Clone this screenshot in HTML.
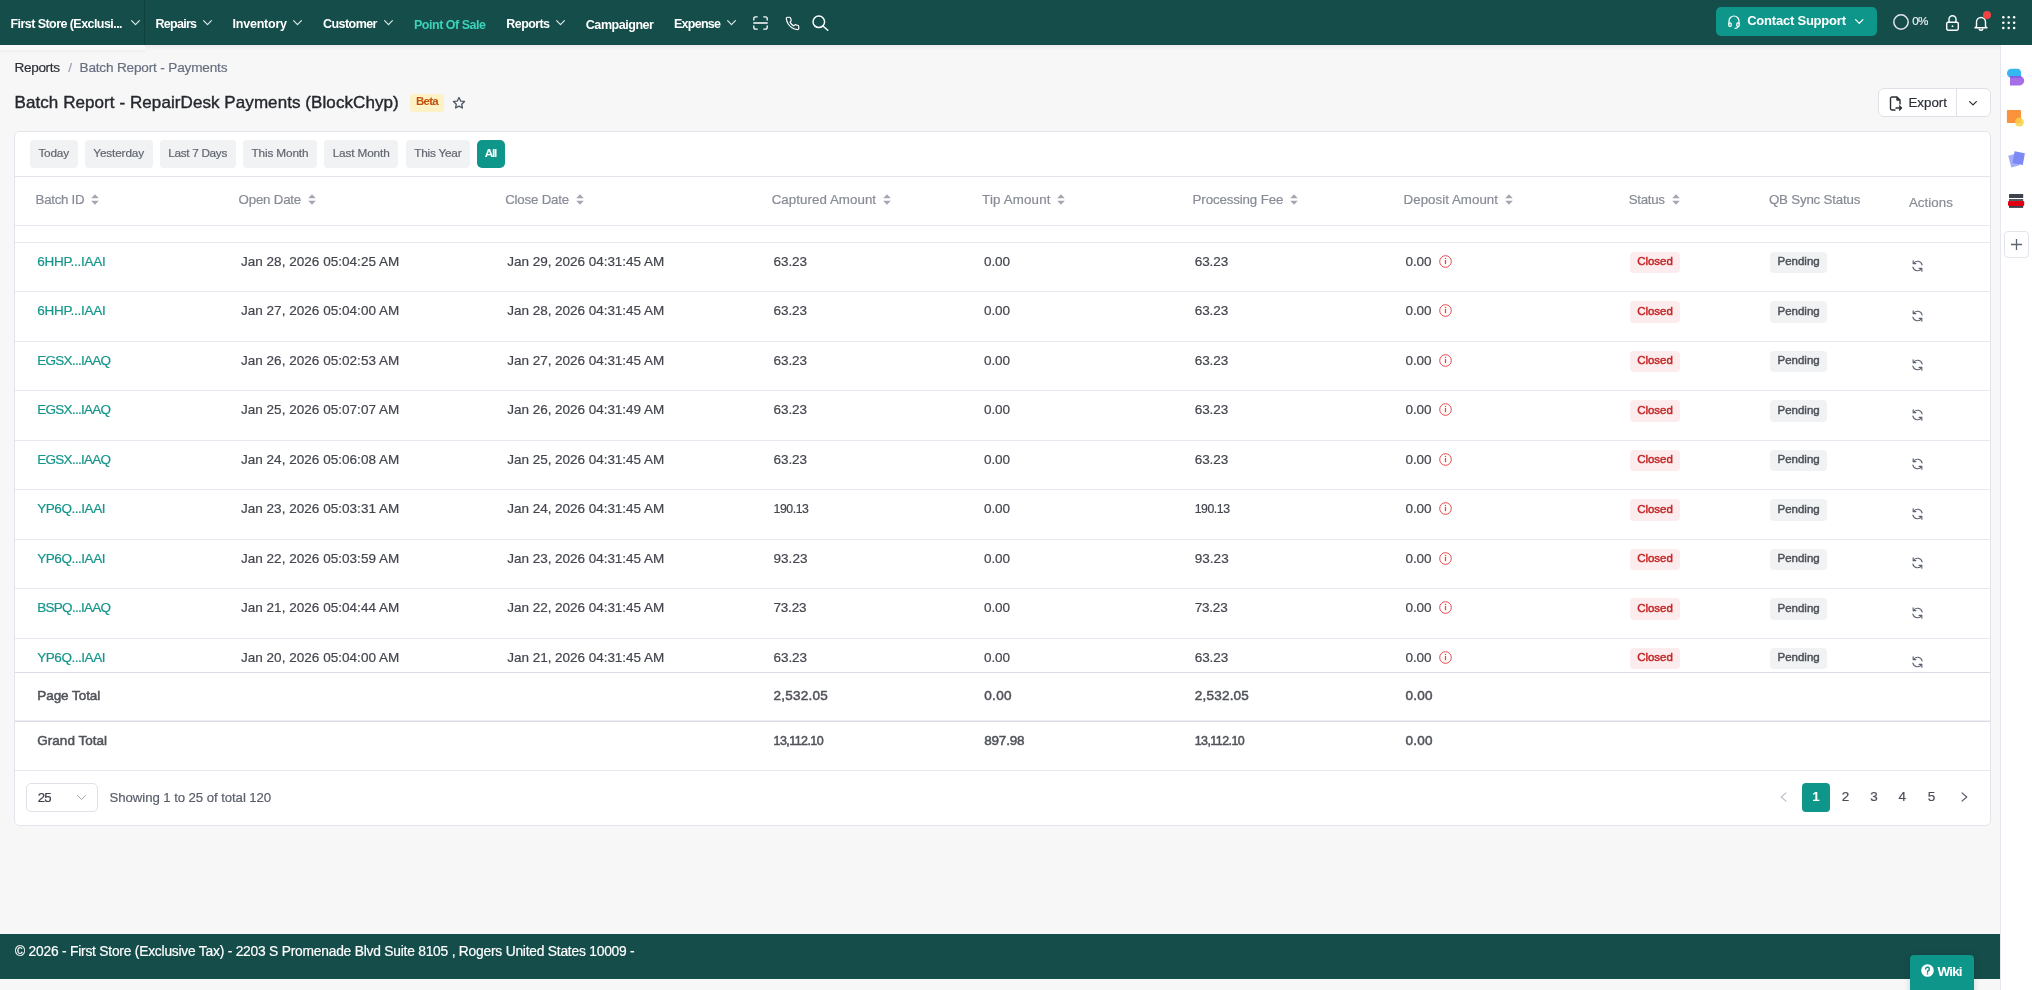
<!DOCTYPE html>
<html><head><meta charset="utf-8"><title>Batch Report - Payments</title>
<style>
html,body{margin:0;padding:0;width:2032px;height:990px;overflow:hidden;background:#f7f7f7}
body{position:relative;font-family:"Liberation Sans", sans-serif}
.t{position:absolute;white-space:nowrap}
.b{position:absolute}
svg.b{overflow:visible}
</style></head><body>
<div id="root" style="position:absolute;left:0;top:0;width:2032px;height:990px;will-change:transform"><div class="b" style="left:0px;top:0px;width:2032px;height:45px;background:#154d4b"></div><div class="b" style="left:145px;top:45px;width:1887px;height:5px;background:linear-gradient(rgba(0,0,0,0.045),rgba(0,0,0,0))"></div><div class="b" style="left:0px;top:45px;width:145px;height:5px;background:#f9f9f9"></div><div class="b" style="left:0px;top:50px;width:145px;height:4px;background:linear-gradient(rgba(0,0,0,0.035),rgba(0,0,0,0))"></div><div class="t" style="left:10.5px;top:18.02px;font-size:12.5px;line-height:12.5px;color:#fff;font-weight:700;letter-spacing:-0.56px;">First Store (Exclusi...</div><svg class="b" style="left:131px;top:20px" width="9" height="5.3" viewBox="0 0 9 5.3"><path d="M0.6 0.6 L4.5 4.7 L8.4 0.6" fill="none" stroke="#dfe6e6" stroke-width="1.2" stroke-linecap="round" stroke-linejoin="round"/></svg><div class="b" style="left:144px;top:0px;width:1px;height:45px;background:#10403e"></div><div class="t" style="left:155.5px;top:18.02px;font-size:12.5px;line-height:12.5px;color:#fff;font-weight:700;letter-spacing:-0.729px;">Repairs</div><svg class="b" style="left:203px;top:20px" width="9" height="5.3" viewBox="0 0 9 5.3"><path d="M0.6 0.6 L4.5 4.7 L8.4 0.6" fill="none" stroke="#dfe6e6" stroke-width="1.2" stroke-linecap="round" stroke-linejoin="round"/></svg><div class="t" style="left:232.5px;top:18.02px;font-size:12.5px;line-height:12.5px;color:#fff;font-weight:700;letter-spacing:-0.219px;">Inventory</div><svg class="b" style="left:293px;top:20px" width="9" height="5.3" viewBox="0 0 9 5.3"><path d="M0.6 0.6 L4.5 4.7 L8.4 0.6" fill="none" stroke="#dfe6e6" stroke-width="1.2" stroke-linecap="round" stroke-linejoin="round"/></svg><div class="t" style="left:323.0px;top:18.02px;font-size:12.5px;line-height:12.5px;color:#fff;font-weight:700;letter-spacing:-0.554px;">Customer</div><svg class="b" style="left:384px;top:20px" width="9" height="5.3" viewBox="0 0 9 5.3"><path d="M0.6 0.6 L4.5 4.7 L8.4 0.6" fill="none" stroke="#dfe6e6" stroke-width="1.2" stroke-linecap="round" stroke-linejoin="round"/></svg><div class="t" style="left:414.0px;top:19.02px;font-size:12.5px;line-height:12.5px;color:#3bd3ba;font-weight:700;letter-spacing:-0.484px;">Point Of Sale</div><div class="t" style="left:506.3px;top:18.02px;font-size:12.5px;line-height:12.5px;color:#fff;font-weight:700;letter-spacing:-0.575px;">Reports</div><svg class="b" style="left:556px;top:20px" width="9" height="5.3" viewBox="0 0 9 5.3"><path d="M0.6 0.6 L4.5 4.7 L8.4 0.6" fill="none" stroke="#dfe6e6" stroke-width="1.2" stroke-linecap="round" stroke-linejoin="round"/></svg><div class="t" style="left:585.8px;top:19.02px;font-size:12.5px;line-height:12.5px;color:#fff;font-weight:700;letter-spacing:-0.45px;">Campaigner</div><div class="t" style="left:674.0px;top:18.02px;font-size:12.5px;line-height:12.5px;color:#fff;font-weight:700;letter-spacing:-0.74px;">Expense</div><svg class="b" style="left:727px;top:20px" width="9" height="5.3" viewBox="0 0 9 5.3"><path d="M0.6 0.6 L4.5 4.7 L8.4 0.6" fill="none" stroke="#dfe6e6" stroke-width="1.2" stroke-linecap="round" stroke-linejoin="round"/></svg><svg class="b" style="left:753px;top:16px" width="15" height="14" viewBox="0 0 15 14" fill="none" stroke="#fff" stroke-width="1.3" stroke-linecap="round"><path d="M0.8 4V2.6A1.8 1.8 0 0 1 2.6 0.8H4.2M10.8 0.8h1.6a1.8 1.8 0 0 1 1.8 1.8V4M14.2 10v1.4a1.8 1.8 0 0 1-1.8 1.8h-1.6M4.2 13.2H2.6a1.8 1.8 0 0 1-1.8-1.8V10M0.8 7h13.4"/></svg><svg class="b" style="left:785px;top:16px" width="15" height="15" viewBox="0 0 24 24" fill="none" stroke="#fff" stroke-width="1.9" stroke-linecap="round" stroke-linejoin="round"><path d="M22 16.9v3a2 2 0 0 1-2.2 2 19.8 19.8 0 0 1-8.6-3.1 19.5 19.5 0 0 1-6-6A19.8 19.8 0 0 1 2.1 4.2 2 2 0 0 1 4.1 2h3a2 2 0 0 1 2 1.7c.1 1 .4 1.9.7 2.8a2 2 0 0 1-.5 2.1L8 9.8a16 16 0 0 0 6 6l1.3-1.3a2 2 0 0 1 2.1-.4c.9.3 1.8.6 2.8.7a2 2 0 0 1 1.7 2z"/></svg><svg class="b" style="left:812px;top:15px" width="17" height="16" viewBox="0 0 17 16" fill="none" stroke="#fff" stroke-width="1.5" stroke-linecap="round"><circle cx="6.8" cy="6.8" r="5.8"/><path d="M11.2 11.2 L15.8 15.3"/></svg><div class="b" style="left:1716px;top:7px;width:161px;height:29px;background:#0f968a;border-radius:5px"></div><svg class="b" style="left:1728px;top:15px" width="12" height="14" viewBox="0 0 12 14" fill="none" stroke="#fff" stroke-width="1.2" stroke-linecap="round"><path d="M1 9V6a5 5 0 0 1 10 0v3"/><rect x="0.8" y="7.8" width="2.4" height="3.6" rx="1"/><rect x="8.8" y="7.8" width="2.4" height="3.6" rx="1"/><path d="M10 11.5c0 1-1 1.8-3 1.8"/></svg><div class="t" style="left:1747.2px;top:14.00px;font-size:13px;line-height:13px;color:#fff;font-weight:700;letter-spacing:-0.218px;">Contact Support</div><svg class="b" style="left:1855px;top:19px" width="8.5" height="5" viewBox="0 0 8.5 5"><path d="M0.6 0.6 L4.25 4.4 L7.9 0.6" fill="none" stroke="#fff" stroke-width="1.2" stroke-linecap="round" stroke-linejoin="round"/></svg><svg class="b" style="left:1893px;top:14px" width="16" height="16" viewBox="0 0 16 16"><circle cx="8" cy="8" r="7.2" fill="none" stroke="#e4e4ee" stroke-width="1.5"/></svg><div class="t" style="left:1912.3px;top:15.10px;font-size:11.7px;line-height:11.7px;color:#ececf2;font-weight:400;letter-spacing:-0.706px;-webkit-text-stroke:0.2px #ececf2;">0%</div><svg class="b" style="left:1946px;top:15px" width="13" height="16" viewBox="0 0 13 16" fill="none" stroke="#fff" stroke-width="1.4"><rect x="0.7" y="7.2" width="11.6" height="8" rx="1.6"/><path d="M3 7.2V4.3a3.5 3.5 0 0 1 7 0v2.9"/><circle cx="6.5" cy="11.2" r="0.9" fill="#fff" stroke="none"/></svg><svg class="b" style="left:1974px;top:15px" width="14" height="16" viewBox="0 0 14 16" fill="none" stroke="#fff" stroke-width="1.4" stroke-linejoin="round"><path d="M2.5 11.5V7a4.5 4.5 0 0 1 9 0v4.5l1.5 1.2H1z"/><path d="M5.2 13.5a1.8 1.8 0 0 0 3.6 0"/></svg><div class="b" style="left:1983px;top:11px;width:8px;height:8px;background:#ef4444;border-radius:50%"></div><svg class="b" style="left:2002px;top:16px" width="14" height="14" viewBox="0 0 14 14"><circle cx="1.3" cy="1.3" r="1.25" fill="#fff"/><circle cx="6.7" cy="1.3" r="1.25" fill="#fff"/><circle cx="12.100000000000001" cy="1.3" r="1.25" fill="#fff"/><circle cx="1.3" cy="6.7" r="1.25" fill="#fff"/><circle cx="6.7" cy="6.7" r="1.25" fill="#fff"/><circle cx="12.100000000000001" cy="6.7" r="1.25" fill="#fff"/><circle cx="1.3" cy="12.100000000000001" r="1.25" fill="#fff"/><circle cx="6.7" cy="12.100000000000001" r="1.25" fill="#fff"/><circle cx="12.100000000000001" cy="12.100000000000001" r="1.25" fill="#fff"/></svg><div class="b" style="left:2000px;top:45px;width:32px;height:945px;background:#fff;border-left:1px solid #e6e7ee;box-sizing:border-box"></div><svg class="b" style="left:2006px;top:68px" width="19" height="18" viewBox="0 0 19 18"><path d="M5.4 0.8H11a4 4 0 0 1 4 4V9.7H5.4a4.45 4.45 0 0 1 0-8.9z" fill="#35b8f2"/><path d="M4 8.1H13.5a4.7 4.7 0 0 1 0 9.4H4z" fill="#a66ee6"/><path d="M4 8.1H15V9.7H4z" fill="#7c5ce0"/></svg><svg class="b" style="left:2006px;top:109px" width="19" height="19" viewBox="0 0 19 19"><rect x="0.9" y="1" width="14.1" height="13" rx="0.8" fill="#fb923c"/><circle cx="13.4" cy="13.1" r="4.5" fill="#f7d04a" opacity="0.85"/></svg><svg class="b" style="left:2007px;top:150px" width="19" height="19" viewBox="0 0 19 19"><path d="M1.2 5.8 L9.5 3.5 L12.6 15.3 L4.3 17.6z" fill="#a3acfb" /><path d="M7.6 1.2 L17.9 3.2 L15.8 14.9 L5.5 12.9z" fill="#7d8af5"/></svg><svg class="b" style="left:2008px;top:194px" width="17" height="14" viewBox="0 0 17 14"><rect x="1" y="0" width="14.2" height="4" rx="0.6" fill="#3d424d"/><rect x="1" y="5" width="14.2" height="2" fill="#555b66"/><rect x="1" y="11.5" width="14.2" height="2.4" fill="#3d424d"/><rect x="0" y="7" width="16.2" height="5" rx="1.2" fill="#e0000f"/></svg><div class="b" style="left:2004px;top:231px;width:25px;height:27px;background:#fff;border:1px solid #e3e5ec;border-radius:4px;box-sizing:border-box"></div><svg class="b" style="left:2010px;top:238px" width="13" height="13" viewBox="0 0 13 13" stroke="#5b6270" stroke-width="1.3"><path d="M6.5 1v11M1 6.5h11"/></svg><div class="t" style="left:14.5px;top:61.09px;font-size:13.6px;line-height:13.6px;color:#2b2f36;font-weight:400;letter-spacing:-0.35px;-webkit-text-stroke:0.2px #2b2f36;">Reports</div><div class="t" style="left:68.2px;top:61.09px;font-size:13.6px;line-height:13.6px;color:#9aa0ad;font-weight:400;letter-spacing:0px;-webkit-text-stroke:0.2px #9aa0ad;">/</div><div class="t" style="left:79.5px;top:61.09px;font-size:13.6px;line-height:13.6px;color:#687080;font-weight:400;letter-spacing:-0.178px;-webkit-text-stroke:0.2px #687080;">Batch Report - Payments</div><div class="t" style="left:14.5px;top:93.61px;font-size:17px;line-height:17px;color:#25282e;font-weight:400;letter-spacing:0.077px;-webkit-text-stroke:0.4px #25282e;">Batch Report - RepairDesk Payments (BlockChyp)</div><div class="b" style="left:410px;top:94px;width:34px;height:18px;background:#fdf2c6;border-radius:4px"></div><div class="t" style="left:416.0px;top:95.87px;font-size:11.5px;line-height:11.5px;color:#c2510c;font-weight:700;letter-spacing:-0.737px;">Beta</div><svg class="b" style="left:452px;top:96px" width="14" height="14" viewBox="0 0 24 24" fill="none" stroke="#4b5260" stroke-width="2.2" stroke-linejoin="round"><path d="M12 2.5l2.9 6.1 6.6.8-4.9 4.6 1.3 6.6L12 17.3l-5.9 3.3 1.3-6.6-4.9-4.6 6.6-.8z"/></svg><div class="b" style="left:1878px;top:88px;width:113px;height:29px;background:#fff;border:1px solid #dfe1e8;border-radius:6px;box-sizing:border-box"></div><div class="b" style="left:1956px;top:89px;width:1px;height:27px;background:#dfe1e8"></div><svg class="b" style="left:1889px;top:96px" width="14" height="15" viewBox="0 0 14 15" fill="none" stroke="#2b2f36" stroke-width="1.4" stroke-linejoin="round" stroke-linecap="round"><path d="M8 1H3a1.5 1.5 0 0 0-1.5 1.5v10A1.5 1.5 0 0 0 3 14h3M8 1l3 3v4M8 1v3h3M7 12h5.5M10.5 10l2 2-2 2"/></svg><div class="t" style="left:1908.4px;top:95.74px;font-size:13.3px;line-height:13.3px;color:#2b2f36;font-weight:400;letter-spacing:0.033px;-webkit-text-stroke:0.2px #2b2f36;">Export</div><svg class="b" style="left:1969px;top:101px" width="8" height="4.5" viewBox="0 0 8 4.5"><path d="M0.65 0.65 L4.0 3.85 L7.35 0.65" fill="none" stroke="#2b2f36" stroke-width="1.3" stroke-linecap="round" stroke-linejoin="round"/></svg><div class="b" style="left:14px;top:131px;width:1977px;height:695px;background:#fff;border:1px solid #e3e5ec;border-radius:5px;box-sizing:border-box"></div><div class="b" style="left:30px;top:140px;width:48px;height:28px;background:#f1f2f4;border-radius:4px"></div><div class="t" style="left:38.4px;top:147.61px;font-size:11.8px;line-height:11.8px;color:#62666f;font-weight:400;letter-spacing:-0.202px;-webkit-text-stroke:0.2px #62666f;">Today</div><div class="b" style="left:85px;top:140px;width:68px;height:28px;background:#f1f2f4;border-radius:4px"></div><div class="t" style="left:93.3px;top:147.61px;font-size:11.8px;line-height:11.8px;color:#62666f;font-weight:400;letter-spacing:-0.155px;-webkit-text-stroke:0.2px #62666f;">Yesterday</div><div class="b" style="left:160px;top:140px;width:76px;height:28px;background:#f1f2f4;border-radius:4px"></div><div class="t" style="left:168.3px;top:147.61px;font-size:11.8px;line-height:11.8px;color:#62666f;font-weight:400;letter-spacing:-0.33px;-webkit-text-stroke:0.2px #62666f;">Last 7 Days</div><div class="b" style="left:243px;top:140px;width:74px;height:28px;background:#f1f2f4;border-radius:4px"></div><div class="t" style="left:251.5px;top:147.61px;font-size:11.8px;line-height:11.8px;color:#62666f;font-weight:400;letter-spacing:-0.15px;-webkit-text-stroke:0.2px #62666f;">This Month</div><div class="b" style="left:324px;top:140px;width:74px;height:28px;background:#f1f2f4;border-radius:4px"></div><div class="t" style="left:332.7px;top:147.61px;font-size:11.8px;line-height:11.8px;color:#62666f;font-weight:400;letter-spacing:-0.15px;-webkit-text-stroke:0.2px #62666f;">Last Month</div><div class="b" style="left:406px;top:140px;width:64px;height:28px;background:#f1f2f4;border-radius:4px"></div><div class="t" style="left:414.2px;top:147.61px;font-size:11.8px;line-height:11.8px;color:#62666f;font-weight:400;letter-spacing:-0.226px;-webkit-text-stroke:0.2px #62666f;">This Year</div><div class="b" style="left:477px;top:140px;width:28px;height:28px;background:#0f968a;border-radius:5px"></div><div class="t" style="left:484.8px;top:147.61px;font-size:11.8px;line-height:11.8px;color:#fff;font-weight:700;letter-spacing:-1.352px;">All</div><div class="b" style="left:15px;top:176px;width:1975px;height:1px;background:#e3e5ec"></div><div class="t" style="left:35.6px;top:192.74px;font-size:13.3px;line-height:13.3px;color:#878b96;font-weight:400;letter-spacing:-0.287px;-webkit-text-stroke:0.2px #878b96;">Batch ID</div><svg class="b" style="left:91px;top:194px" width="8" height="11" viewBox="0 0 8 11"><path d="M4 0.3 L7.8 4.3 H0.2z M4 10.7 L7.8 6.7 H0.2z" fill="#a3a7b1"/></svg><div class="t" style="left:238.6px;top:192.74px;font-size:13.3px;line-height:13.3px;color:#878b96;font-weight:400;letter-spacing:-0.213px;-webkit-text-stroke:0.2px #878b96;">Open Date</div><svg class="b" style="left:308px;top:194px" width="8" height="11" viewBox="0 0 8 11"><path d="M4 0.3 L7.8 4.3 H0.2z M4 10.7 L7.8 6.7 H0.2z" fill="#a3a7b1"/></svg><div class="t" style="left:505.2px;top:192.74px;font-size:13.3px;line-height:13.3px;color:#878b96;font-weight:400;letter-spacing:-0.196px;-webkit-text-stroke:0.2px #878b96;">Close Date</div><svg class="b" style="left:576px;top:194px" width="8" height="11" viewBox="0 0 8 11"><path d="M4 0.3 L7.8 4.3 H0.2z M4 10.7 L7.8 6.7 H0.2z" fill="#a3a7b1"/></svg><div class="t" style="left:771.7px;top:192.74px;font-size:13.3px;line-height:13.3px;color:#878b96;font-weight:400;letter-spacing:0.061px;-webkit-text-stroke:0.2px #878b96;">Captured Amount</div><svg class="b" style="left:883px;top:194px" width="8" height="11" viewBox="0 0 8 11"><path d="M4 0.3 L7.8 4.3 H0.2z M4 10.7 L7.8 6.7 H0.2z" fill="#a3a7b1"/></svg><div class="t" style="left:982.1px;top:192.74px;font-size:13.3px;line-height:13.3px;color:#878b96;font-weight:400;letter-spacing:0.17px;-webkit-text-stroke:0.2px #878b96;">Tip Amount</div><svg class="b" style="left:1057px;top:194px" width="8" height="11" viewBox="0 0 8 11"><path d="M4 0.3 L7.8 4.3 H0.2z M4 10.7 L7.8 6.7 H0.2z" fill="#a3a7b1"/></svg><div class="t" style="left:1192.6px;top:192.74px;font-size:13.3px;line-height:13.3px;color:#878b96;font-weight:400;letter-spacing:-0.126px;-webkit-text-stroke:0.2px #878b96;">Processing Fee</div><svg class="b" style="left:1290px;top:194px" width="8" height="11" viewBox="0 0 8 11"><path d="M4 0.3 L7.8 4.3 H0.2z M4 10.7 L7.8 6.7 H0.2z" fill="#a3a7b1"/></svg><div class="t" style="left:1403.6px;top:192.74px;font-size:13.3px;line-height:13.3px;color:#878b96;font-weight:400;letter-spacing:0.039px;-webkit-text-stroke:0.2px #878b96;">Deposit Amount</div><svg class="b" style="left:1505px;top:194px" width="8" height="11" viewBox="0 0 8 11"><path d="M4 0.3 L7.8 4.3 H0.2z M4 10.7 L7.8 6.7 H0.2z" fill="#a3a7b1"/></svg><div class="t" style="left:1628.7px;top:192.74px;font-size:13.3px;line-height:13.3px;color:#878b96;font-weight:400;letter-spacing:-0.281px;-webkit-text-stroke:0.2px #878b96;">Status</div><svg class="b" style="left:1672px;top:194px" width="8" height="11" viewBox="0 0 8 11"><path d="M4 0.3 L7.8 4.3 H0.2z M4 10.7 L7.8 6.7 H0.2z" fill="#a3a7b1"/></svg><div class="t" style="left:1768.9px;top:192.74px;font-size:13.3px;line-height:13.3px;color:#878b96;font-weight:400;letter-spacing:-0.184px;-webkit-text-stroke:0.2px #878b96;">QB Sync Status</div><div class="t" style="left:1908.9px;top:195.74px;font-size:13.3px;line-height:13.3px;color:#878b96;font-weight:400;letter-spacing:0.079px;-webkit-text-stroke:0.2px #878b96;">Actions</div><div class="b" style="left:15px;top:225px;width:1975px;height:1px;background:#e8e9f0"></div><div class="b" style="left:15px;top:242px;width:1975px;height:1px;background:#e8e9f0"></div><div class="b" style="left:15px;top:243px;width:1975px;height:429px;overflow:hidden"><div class="t" style="left:22.3px;top:11.87px;font-size:13.5px;line-height:13.5px;color:#15968b;font-weight:400;letter-spacing:-0.261px;-webkit-text-stroke:0.2px #15968b;">6HHP...IAAI</div><div class="t" style="left:225.9px;top:11.87px;font-size:13.5px;line-height:13.5px;color:#43464e;font-weight:400;letter-spacing:0.034px;-webkit-text-stroke:0.2px #43464e;">Jan 28, 2026 05:04:25 AM</div><div class="t" style="left:492.3px;top:11.87px;font-size:13.5px;line-height:13.5px;color:#43464e;font-weight:400;letter-spacing:-0.031px;-webkit-text-stroke:0.2px #43464e;">Jan 29, 2026 04:31:45 AM</div><div class="t" style="left:758.5px;top:11.87px;font-size:13.5px;line-height:13.5px;color:#43464e;font-weight:400;letter-spacing:-0.054px;-webkit-text-stroke:0.2px #43464e;">63.23</div><div class="t" style="left:969.0px;top:11.87px;font-size:13.5px;line-height:13.5px;color:#43464e;font-weight:400;letter-spacing:-0.086px;-webkit-text-stroke:0.2px #43464e;">0.00</div><div class="t" style="left:1179.7px;top:11.87px;font-size:13.5px;line-height:13.5px;color:#43464e;font-weight:400;letter-spacing:-0.054px;-webkit-text-stroke:0.2px #43464e;">63.23</div><div class="t" style="left:1390.5px;top:11.87px;font-size:13.5px;line-height:13.5px;color:#43464e;font-weight:400;letter-spacing:-0.086px;-webkit-text-stroke:0.2px #43464e;">0.00</div><svg class="b" style="left:1424px;top:12.30px" width="13" height="13" viewBox="0 0 13 13"><circle cx="6.5" cy="6.5" r="5.8" fill="none" stroke="#e5484d" stroke-width="1"/><path d="M6.5 5v4.2" stroke="#e5484d" stroke-width="1.3"/><circle cx="6.5" cy="3.5" r="0.75" fill="#e5484d"/></svg><div class="b" style="left:1615px;top:9.30px;width:50px;height:21px;background:#fdeced;border-radius:4px"></div><div class="t" style="left:1622.3px;top:12.97px;font-size:11.5px;line-height:11.5px;color:#c42626;font-weight:400;letter-spacing:-0.064px;-webkit-text-stroke:0.45px #c42626;">Closed</div><div class="b" style="left:1755px;top:9.30px;width:57px;height:21px;background:#f1f2f4;border-radius:4px"></div><div class="t" style="left:1762.5px;top:12.97px;font-size:11.5px;line-height:11.5px;color:#4d5159;font-weight:400;letter-spacing:-0.001px;-webkit-text-stroke:0.45px #4d5159;">Pending</div><svg class="b" style="left:1896px;top:17.30px" width="13" height="12" viewBox="0 0 24 22" fill="none" stroke="#5a6270" stroke-width="2.1" stroke-linecap="round" stroke-linejoin="round"><path d="M20.5 9A8.7 8.7 0 0 0 4.5 6.5M3.5 13a8.7 8.7 0 0 0 16 2.5"/><path d="M4 1.5v5h5M20 20.5v-5h-5"/></svg><div class="b" style="left:0px;top:48px;width:1975px;height:1px;background:#e8e9f0"></div><div class="t" style="left:22.3px;top:60.87px;font-size:13.5px;line-height:13.5px;color:#15968b;font-weight:400;letter-spacing:-0.261px;-webkit-text-stroke:0.2px #15968b;">6HHP...IAAI</div><div class="t" style="left:225.9px;top:60.87px;font-size:13.5px;line-height:13.5px;color:#43464e;font-weight:400;letter-spacing:0.034px;-webkit-text-stroke:0.2px #43464e;">Jan 27, 2026 05:04:00 AM</div><div class="t" style="left:492.3px;top:60.87px;font-size:13.5px;line-height:13.5px;color:#43464e;font-weight:400;letter-spacing:-0.031px;-webkit-text-stroke:0.2px #43464e;">Jan 28, 2026 04:31:45 AM</div><div class="t" style="left:758.5px;top:60.87px;font-size:13.5px;line-height:13.5px;color:#43464e;font-weight:400;letter-spacing:-0.054px;-webkit-text-stroke:0.2px #43464e;">63.23</div><div class="t" style="left:969.0px;top:60.87px;font-size:13.5px;line-height:13.5px;color:#43464e;font-weight:400;letter-spacing:-0.086px;-webkit-text-stroke:0.2px #43464e;">0.00</div><div class="t" style="left:1179.7px;top:60.87px;font-size:13.5px;line-height:13.5px;color:#43464e;font-weight:400;letter-spacing:-0.054px;-webkit-text-stroke:0.2px #43464e;">63.23</div><div class="t" style="left:1390.5px;top:60.87px;font-size:13.5px;line-height:13.5px;color:#43464e;font-weight:400;letter-spacing:-0.086px;-webkit-text-stroke:0.2px #43464e;">0.00</div><svg class="b" style="left:1424px;top:61.30px" width="13" height="13" viewBox="0 0 13 13"><circle cx="6.5" cy="6.5" r="5.8" fill="none" stroke="#e5484d" stroke-width="1"/><path d="M6.5 5v4.2" stroke="#e5484d" stroke-width="1.3"/><circle cx="6.5" cy="3.5" r="0.75" fill="#e5484d"/></svg><div class="b" style="left:1615px;top:58.30px;width:50px;height:22px;background:#fdeced;border-radius:4px"></div><div class="t" style="left:1622.3px;top:62.97px;font-size:11.5px;line-height:11.5px;color:#c42626;font-weight:400;letter-spacing:-0.064px;-webkit-text-stroke:0.45px #c42626;">Closed</div><div class="b" style="left:1755px;top:58.30px;width:57px;height:22px;background:#f1f2f4;border-radius:4px"></div><div class="t" style="left:1762.5px;top:62.97px;font-size:11.5px;line-height:11.5px;color:#4d5159;font-weight:400;letter-spacing:-0.001px;-webkit-text-stroke:0.45px #4d5159;">Pending</div><svg class="b" style="left:1896px;top:67.30px" width="13" height="12" viewBox="0 0 24 22" fill="none" stroke="#5a6270" stroke-width="2.1" stroke-linecap="round" stroke-linejoin="round"><path d="M20.5 9A8.7 8.7 0 0 0 4.5 6.5M3.5 13a8.7 8.7 0 0 0 16 2.5"/><path d="M4 1.5v5h5M20 20.5v-5h-5"/></svg><div class="b" style="left:0px;top:98px;width:1975px;height:1px;background:#e8e9f0"></div><div class="t" style="left:22.3px;top:110.87px;font-size:13.5px;line-height:13.5px;color:#15968b;font-weight:400;letter-spacing:-0.73px;-webkit-text-stroke:0.2px #15968b;">EGSX...IAAQ</div><div class="t" style="left:225.9px;top:110.87px;font-size:13.5px;line-height:13.5px;color:#43464e;font-weight:400;letter-spacing:0.034px;-webkit-text-stroke:0.2px #43464e;">Jan 26, 2026 05:02:53 AM</div><div class="t" style="left:492.3px;top:110.87px;font-size:13.5px;line-height:13.5px;color:#43464e;font-weight:400;letter-spacing:-0.031px;-webkit-text-stroke:0.2px #43464e;">Jan 27, 2026 04:31:45 AM</div><div class="t" style="left:758.5px;top:110.87px;font-size:13.5px;line-height:13.5px;color:#43464e;font-weight:400;letter-spacing:-0.054px;-webkit-text-stroke:0.2px #43464e;">63.23</div><div class="t" style="left:969.0px;top:110.87px;font-size:13.5px;line-height:13.5px;color:#43464e;font-weight:400;letter-spacing:-0.086px;-webkit-text-stroke:0.2px #43464e;">0.00</div><div class="t" style="left:1179.7px;top:110.87px;font-size:13.5px;line-height:13.5px;color:#43464e;font-weight:400;letter-spacing:-0.054px;-webkit-text-stroke:0.2px #43464e;">63.23</div><div class="t" style="left:1390.5px;top:110.87px;font-size:13.5px;line-height:13.5px;color:#43464e;font-weight:400;letter-spacing:-0.086px;-webkit-text-stroke:0.2px #43464e;">0.00</div><svg class="b" style="left:1424px;top:111.30px" width="13" height="13" viewBox="0 0 13 13"><circle cx="6.5" cy="6.5" r="5.8" fill="none" stroke="#e5484d" stroke-width="1"/><path d="M6.5 5v4.2" stroke="#e5484d" stroke-width="1.3"/><circle cx="6.5" cy="3.5" r="0.75" fill="#e5484d"/></svg><div class="b" style="left:1615px;top:108.30px;width:50px;height:21px;background:#fdeced;border-radius:4px"></div><div class="t" style="left:1622.3px;top:111.97px;font-size:11.5px;line-height:11.5px;color:#c42626;font-weight:400;letter-spacing:-0.064px;-webkit-text-stroke:0.45px #c42626;">Closed</div><div class="b" style="left:1755px;top:108.30px;width:57px;height:21px;background:#f1f2f4;border-radius:4px"></div><div class="t" style="left:1762.5px;top:111.97px;font-size:11.5px;line-height:11.5px;color:#4d5159;font-weight:400;letter-spacing:-0.001px;-webkit-text-stroke:0.45px #4d5159;">Pending</div><svg class="b" style="left:1896px;top:116.30px" width="13" height="12" viewBox="0 0 24 22" fill="none" stroke="#5a6270" stroke-width="2.1" stroke-linecap="round" stroke-linejoin="round"><path d="M20.5 9A8.7 8.7 0 0 0 4.5 6.5M3.5 13a8.7 8.7 0 0 0 16 2.5"/><path d="M4 1.5v5h5M20 20.5v-5h-5"/></svg><div class="b" style="left:0px;top:147px;width:1975px;height:1px;background:#e8e9f0"></div><div class="t" style="left:22.3px;top:159.87px;font-size:13.5px;line-height:13.5px;color:#15968b;font-weight:400;letter-spacing:-0.73px;-webkit-text-stroke:0.2px #15968b;">EGSX...IAAQ</div><div class="t" style="left:225.9px;top:159.87px;font-size:13.5px;line-height:13.5px;color:#43464e;font-weight:400;letter-spacing:0.034px;-webkit-text-stroke:0.2px #43464e;">Jan 25, 2026 05:07:07 AM</div><div class="t" style="left:492.3px;top:159.87px;font-size:13.5px;line-height:13.5px;color:#43464e;font-weight:400;letter-spacing:-0.031px;-webkit-text-stroke:0.2px #43464e;">Jan 26, 2026 04:31:49 AM</div><div class="t" style="left:758.5px;top:159.87px;font-size:13.5px;line-height:13.5px;color:#43464e;font-weight:400;letter-spacing:-0.054px;-webkit-text-stroke:0.2px #43464e;">63.23</div><div class="t" style="left:969.0px;top:159.87px;font-size:13.5px;line-height:13.5px;color:#43464e;font-weight:400;letter-spacing:-0.086px;-webkit-text-stroke:0.2px #43464e;">0.00</div><div class="t" style="left:1179.7px;top:159.87px;font-size:13.5px;line-height:13.5px;color:#43464e;font-weight:400;letter-spacing:-0.054px;-webkit-text-stroke:0.2px #43464e;">63.23</div><div class="t" style="left:1390.5px;top:159.87px;font-size:13.5px;line-height:13.5px;color:#43464e;font-weight:400;letter-spacing:-0.086px;-webkit-text-stroke:0.2px #43464e;">0.00</div><svg class="b" style="left:1424px;top:160.30px" width="13" height="13" viewBox="0 0 13 13"><circle cx="6.5" cy="6.5" r="5.8" fill="none" stroke="#e5484d" stroke-width="1"/><path d="M6.5 5v4.2" stroke="#e5484d" stroke-width="1.3"/><circle cx="6.5" cy="3.5" r="0.75" fill="#e5484d"/></svg><div class="b" style="left:1615px;top:157.30px;width:50px;height:22px;background:#fdeced;border-radius:4px"></div><div class="t" style="left:1622.3px;top:161.97px;font-size:11.5px;line-height:11.5px;color:#c42626;font-weight:400;letter-spacing:-0.064px;-webkit-text-stroke:0.45px #c42626;">Closed</div><div class="b" style="left:1755px;top:157.30px;width:57px;height:22px;background:#f1f2f4;border-radius:4px"></div><div class="t" style="left:1762.5px;top:161.97px;font-size:11.5px;line-height:11.5px;color:#4d5159;font-weight:400;letter-spacing:-0.001px;-webkit-text-stroke:0.45px #4d5159;">Pending</div><svg class="b" style="left:1896px;top:166.30px" width="13" height="12" viewBox="0 0 24 22" fill="none" stroke="#5a6270" stroke-width="2.1" stroke-linecap="round" stroke-linejoin="round"><path d="M20.5 9A8.7 8.7 0 0 0 4.5 6.5M3.5 13a8.7 8.7 0 0 0 16 2.5"/><path d="M4 1.5v5h5M20 20.5v-5h-5"/></svg><div class="b" style="left:0px;top:197px;width:1975px;height:1px;background:#e8e9f0"></div><div class="t" style="left:22.3px;top:209.87px;font-size:13.5px;line-height:13.5px;color:#15968b;font-weight:400;letter-spacing:-0.73px;-webkit-text-stroke:0.2px #15968b;">EGSX...IAAQ</div><div class="t" style="left:225.9px;top:209.87px;font-size:13.5px;line-height:13.5px;color:#43464e;font-weight:400;letter-spacing:0.034px;-webkit-text-stroke:0.2px #43464e;">Jan 24, 2026 05:06:08 AM</div><div class="t" style="left:492.3px;top:209.87px;font-size:13.5px;line-height:13.5px;color:#43464e;font-weight:400;letter-spacing:-0.031px;-webkit-text-stroke:0.2px #43464e;">Jan 25, 2026 04:31:45 AM</div><div class="t" style="left:758.5px;top:209.87px;font-size:13.5px;line-height:13.5px;color:#43464e;font-weight:400;letter-spacing:-0.054px;-webkit-text-stroke:0.2px #43464e;">63.23</div><div class="t" style="left:969.0px;top:209.87px;font-size:13.5px;line-height:13.5px;color:#43464e;font-weight:400;letter-spacing:-0.086px;-webkit-text-stroke:0.2px #43464e;">0.00</div><div class="t" style="left:1179.7px;top:209.87px;font-size:13.5px;line-height:13.5px;color:#43464e;font-weight:400;letter-spacing:-0.054px;-webkit-text-stroke:0.2px #43464e;">63.23</div><div class="t" style="left:1390.5px;top:209.87px;font-size:13.5px;line-height:13.5px;color:#43464e;font-weight:400;letter-spacing:-0.086px;-webkit-text-stroke:0.2px #43464e;">0.00</div><svg class="b" style="left:1424px;top:210.30px" width="13" height="13" viewBox="0 0 13 13"><circle cx="6.5" cy="6.5" r="5.8" fill="none" stroke="#e5484d" stroke-width="1"/><path d="M6.5 5v4.2" stroke="#e5484d" stroke-width="1.3"/><circle cx="6.5" cy="3.5" r="0.75" fill="#e5484d"/></svg><div class="b" style="left:1615px;top:207.30px;width:50px;height:21px;background:#fdeced;border-radius:4px"></div><div class="t" style="left:1622.3px;top:210.97px;font-size:11.5px;line-height:11.5px;color:#c42626;font-weight:400;letter-spacing:-0.064px;-webkit-text-stroke:0.45px #c42626;">Closed</div><div class="b" style="left:1755px;top:207.30px;width:57px;height:21px;background:#f1f2f4;border-radius:4px"></div><div class="t" style="left:1762.5px;top:210.97px;font-size:11.5px;line-height:11.5px;color:#4d5159;font-weight:400;letter-spacing:-0.001px;-webkit-text-stroke:0.45px #4d5159;">Pending</div><svg class="b" style="left:1896px;top:215.30px" width="13" height="12" viewBox="0 0 24 22" fill="none" stroke="#5a6270" stroke-width="2.1" stroke-linecap="round" stroke-linejoin="round"><path d="M20.5 9A8.7 8.7 0 0 0 4.5 6.5M3.5 13a8.7 8.7 0 0 0 16 2.5"/><path d="M4 1.5v5h5M20 20.5v-5h-5"/></svg><div class="b" style="left:0px;top:246px;width:1975px;height:1px;background:#e8e9f0"></div><div class="t" style="left:22.3px;top:258.87px;font-size:13.5px;line-height:13.5px;color:#15968b;font-weight:400;letter-spacing:-0.466px;-webkit-text-stroke:0.2px #15968b;">YP6Q...IAAI</div><div class="t" style="left:225.9px;top:258.87px;font-size:13.5px;line-height:13.5px;color:#43464e;font-weight:400;letter-spacing:0.034px;-webkit-text-stroke:0.2px #43464e;">Jan 23, 2026 05:03:31 AM</div><div class="t" style="left:492.3px;top:258.87px;font-size:13.5px;line-height:13.5px;color:#43464e;font-weight:400;letter-spacing:-0.031px;-webkit-text-stroke:0.2px #43464e;">Jan 24, 2026 04:31:45 AM</div><div class="t" style="left:758.5px;top:259.89px;font-size:12.3px;line-height:12.3px;color:#43464e;font-weight:400;letter-spacing:-0.45px;-webkit-text-stroke:0.2px #43464e;">190.13</div><div class="t" style="left:969.0px;top:258.87px;font-size:13.5px;line-height:13.5px;color:#43464e;font-weight:400;letter-spacing:-0.086px;-webkit-text-stroke:0.2px #43464e;">0.00</div><div class="t" style="left:1179.7px;top:259.89px;font-size:12.3px;line-height:12.3px;color:#43464e;font-weight:400;letter-spacing:-0.45px;-webkit-text-stroke:0.2px #43464e;">190.13</div><div class="t" style="left:1390.5px;top:258.87px;font-size:13.5px;line-height:13.5px;color:#43464e;font-weight:400;letter-spacing:-0.086px;-webkit-text-stroke:0.2px #43464e;">0.00</div><svg class="b" style="left:1424px;top:259.30px" width="13" height="13" viewBox="0 0 13 13"><circle cx="6.5" cy="6.5" r="5.8" fill="none" stroke="#e5484d" stroke-width="1"/><path d="M6.5 5v4.2" stroke="#e5484d" stroke-width="1.3"/><circle cx="6.5" cy="3.5" r="0.75" fill="#e5484d"/></svg><div class="b" style="left:1615px;top:256.30px;width:50px;height:22px;background:#fdeced;border-radius:4px"></div><div class="t" style="left:1622.3px;top:260.97px;font-size:11.5px;line-height:11.5px;color:#c42626;font-weight:400;letter-spacing:-0.064px;-webkit-text-stroke:0.45px #c42626;">Closed</div><div class="b" style="left:1755px;top:256.30px;width:57px;height:22px;background:#f1f2f4;border-radius:4px"></div><div class="t" style="left:1762.5px;top:260.97px;font-size:11.5px;line-height:11.5px;color:#4d5159;font-weight:400;letter-spacing:-0.001px;-webkit-text-stroke:0.45px #4d5159;">Pending</div><svg class="b" style="left:1896px;top:265.30px" width="13" height="12" viewBox="0 0 24 22" fill="none" stroke="#5a6270" stroke-width="2.1" stroke-linecap="round" stroke-linejoin="round"><path d="M20.5 9A8.7 8.7 0 0 0 4.5 6.5M3.5 13a8.7 8.7 0 0 0 16 2.5"/><path d="M4 1.5v5h5M20 20.5v-5h-5"/></svg><div class="b" style="left:0px;top:296px;width:1975px;height:1px;background:#e8e9f0"></div><div class="t" style="left:22.3px;top:308.87px;font-size:13.5px;line-height:13.5px;color:#15968b;font-weight:400;letter-spacing:-0.466px;-webkit-text-stroke:0.2px #15968b;">YP6Q...IAAI</div><div class="t" style="left:225.9px;top:308.87px;font-size:13.5px;line-height:13.5px;color:#43464e;font-weight:400;letter-spacing:0.034px;-webkit-text-stroke:0.2px #43464e;">Jan 22, 2026 05:03:59 AM</div><div class="t" style="left:492.3px;top:308.87px;font-size:13.5px;line-height:13.5px;color:#43464e;font-weight:400;letter-spacing:-0.031px;-webkit-text-stroke:0.2px #43464e;">Jan 23, 2026 04:31:45 AM</div><div class="t" style="left:758.5px;top:308.87px;font-size:13.5px;line-height:13.5px;color:#43464e;font-weight:400;letter-spacing:0.046px;-webkit-text-stroke:0.2px #43464e;">93.23</div><div class="t" style="left:969.0px;top:308.87px;font-size:13.5px;line-height:13.5px;color:#43464e;font-weight:400;letter-spacing:-0.086px;-webkit-text-stroke:0.2px #43464e;">0.00</div><div class="t" style="left:1179.7px;top:308.87px;font-size:13.5px;line-height:13.5px;color:#43464e;font-weight:400;letter-spacing:0.046px;-webkit-text-stroke:0.2px #43464e;">93.23</div><div class="t" style="left:1390.5px;top:308.87px;font-size:13.5px;line-height:13.5px;color:#43464e;font-weight:400;letter-spacing:-0.086px;-webkit-text-stroke:0.2px #43464e;">0.00</div><svg class="b" style="left:1424px;top:309.30px" width="13" height="13" viewBox="0 0 13 13"><circle cx="6.5" cy="6.5" r="5.8" fill="none" stroke="#e5484d" stroke-width="1"/><path d="M6.5 5v4.2" stroke="#e5484d" stroke-width="1.3"/><circle cx="6.5" cy="3.5" r="0.75" fill="#e5484d"/></svg><div class="b" style="left:1615px;top:306.30px;width:50px;height:21px;background:#fdeced;border-radius:4px"></div><div class="t" style="left:1622.3px;top:309.97px;font-size:11.5px;line-height:11.5px;color:#c42626;font-weight:400;letter-spacing:-0.064px;-webkit-text-stroke:0.45px #c42626;">Closed</div><div class="b" style="left:1755px;top:306.30px;width:57px;height:21px;background:#f1f2f4;border-radius:4px"></div><div class="t" style="left:1762.5px;top:309.97px;font-size:11.5px;line-height:11.5px;color:#4d5159;font-weight:400;letter-spacing:-0.001px;-webkit-text-stroke:0.45px #4d5159;">Pending</div><svg class="b" style="left:1896px;top:314.30px" width="13" height="12" viewBox="0 0 24 22" fill="none" stroke="#5a6270" stroke-width="2.1" stroke-linecap="round" stroke-linejoin="round"><path d="M20.5 9A8.7 8.7 0 0 0 4.5 6.5M3.5 13a8.7 8.7 0 0 0 16 2.5"/><path d="M4 1.5v5h5M20 20.5v-5h-5"/></svg><div class="b" style="left:0px;top:345px;width:1975px;height:1px;background:#e8e9f0"></div><div class="t" style="left:22.3px;top:357.87px;font-size:13.5px;line-height:13.5px;color:#15968b;font-weight:400;letter-spacing:-0.73px;-webkit-text-stroke:0.2px #15968b;">BSPQ...IAAQ</div><div class="t" style="left:225.9px;top:357.87px;font-size:13.5px;line-height:13.5px;color:#43464e;font-weight:400;letter-spacing:0.034px;-webkit-text-stroke:0.2px #43464e;">Jan 21, 2026 05:04:44 AM</div><div class="t" style="left:492.3px;top:357.87px;font-size:13.5px;line-height:13.5px;color:#43464e;font-weight:400;letter-spacing:-0.031px;-webkit-text-stroke:0.2px #43464e;">Jan 22, 2026 04:31:45 AM</div><div class="t" style="left:758.5px;top:357.87px;font-size:13.5px;line-height:13.5px;color:#43464e;font-weight:400;letter-spacing:-0.204px;-webkit-text-stroke:0.2px #43464e;">73.23</div><div class="t" style="left:969.0px;top:357.87px;font-size:13.5px;line-height:13.5px;color:#43464e;font-weight:400;letter-spacing:-0.086px;-webkit-text-stroke:0.2px #43464e;">0.00</div><div class="t" style="left:1179.7px;top:357.87px;font-size:13.5px;line-height:13.5px;color:#43464e;font-weight:400;letter-spacing:-0.204px;-webkit-text-stroke:0.2px #43464e;">73.23</div><div class="t" style="left:1390.5px;top:357.87px;font-size:13.5px;line-height:13.5px;color:#43464e;font-weight:400;letter-spacing:-0.086px;-webkit-text-stroke:0.2px #43464e;">0.00</div><svg class="b" style="left:1424px;top:358.30px" width="13" height="13" viewBox="0 0 13 13"><circle cx="6.5" cy="6.5" r="5.8" fill="none" stroke="#e5484d" stroke-width="1"/><path d="M6.5 5v4.2" stroke="#e5484d" stroke-width="1.3"/><circle cx="6.5" cy="3.5" r="0.75" fill="#e5484d"/></svg><div class="b" style="left:1615px;top:355.30px;width:50px;height:22px;background:#fdeced;border-radius:4px"></div><div class="t" style="left:1622.3px;top:359.97px;font-size:11.5px;line-height:11.5px;color:#c42626;font-weight:400;letter-spacing:-0.064px;-webkit-text-stroke:0.45px #c42626;">Closed</div><div class="b" style="left:1755px;top:355.30px;width:57px;height:22px;background:#f1f2f4;border-radius:4px"></div><div class="t" style="left:1762.5px;top:359.97px;font-size:11.5px;line-height:11.5px;color:#4d5159;font-weight:400;letter-spacing:-0.001px;-webkit-text-stroke:0.45px #4d5159;">Pending</div><svg class="b" style="left:1896px;top:364.30px" width="13" height="12" viewBox="0 0 24 22" fill="none" stroke="#5a6270" stroke-width="2.1" stroke-linecap="round" stroke-linejoin="round"><path d="M20.5 9A8.7 8.7 0 0 0 4.5 6.5M3.5 13a8.7 8.7 0 0 0 16 2.5"/><path d="M4 1.5v5h5M20 20.5v-5h-5"/></svg><div class="b" style="left:0px;top:395px;width:1975px;height:1px;background:#e8e9f0"></div><div class="t" style="left:22.3px;top:407.87px;font-size:13.5px;line-height:13.5px;color:#15968b;font-weight:400;letter-spacing:-0.466px;-webkit-text-stroke:0.2px #15968b;">YP6Q...IAAI</div><div class="t" style="left:225.9px;top:407.87px;font-size:13.5px;line-height:13.5px;color:#43464e;font-weight:400;letter-spacing:0.034px;-webkit-text-stroke:0.2px #43464e;">Jan 20, 2026 05:04:00 AM</div><div class="t" style="left:492.3px;top:407.87px;font-size:13.5px;line-height:13.5px;color:#43464e;font-weight:400;letter-spacing:-0.031px;-webkit-text-stroke:0.2px #43464e;">Jan 21, 2026 04:31:45 AM</div><div class="t" style="left:758.5px;top:407.87px;font-size:13.5px;line-height:13.5px;color:#43464e;font-weight:400;letter-spacing:-0.054px;-webkit-text-stroke:0.2px #43464e;">63.23</div><div class="t" style="left:969.0px;top:407.87px;font-size:13.5px;line-height:13.5px;color:#43464e;font-weight:400;letter-spacing:-0.086px;-webkit-text-stroke:0.2px #43464e;">0.00</div><div class="t" style="left:1179.7px;top:407.87px;font-size:13.5px;line-height:13.5px;color:#43464e;font-weight:400;letter-spacing:-0.054px;-webkit-text-stroke:0.2px #43464e;">63.23</div><div class="t" style="left:1390.5px;top:407.87px;font-size:13.5px;line-height:13.5px;color:#43464e;font-weight:400;letter-spacing:-0.086px;-webkit-text-stroke:0.2px #43464e;">0.00</div><svg class="b" style="left:1424px;top:408.30px" width="13" height="13" viewBox="0 0 13 13"><circle cx="6.5" cy="6.5" r="5.8" fill="none" stroke="#e5484d" stroke-width="1"/><path d="M6.5 5v4.2" stroke="#e5484d" stroke-width="1.3"/><circle cx="6.5" cy="3.5" r="0.75" fill="#e5484d"/></svg><div class="b" style="left:1615px;top:405.30px;width:50px;height:21px;background:#fdeced;border-radius:4px"></div><div class="t" style="left:1622.3px;top:408.97px;font-size:11.5px;line-height:11.5px;color:#c42626;font-weight:400;letter-spacing:-0.064px;-webkit-text-stroke:0.45px #c42626;">Closed</div><div class="b" style="left:1755px;top:405.30px;width:57px;height:21px;background:#f1f2f4;border-radius:4px"></div><div class="t" style="left:1762.5px;top:408.97px;font-size:11.5px;line-height:11.5px;color:#4d5159;font-weight:400;letter-spacing:-0.001px;-webkit-text-stroke:0.45px #4d5159;">Pending</div><svg class="b" style="left:1896px;top:413.30px" width="13" height="12" viewBox="0 0 24 22" fill="none" stroke="#5a6270" stroke-width="2.1" stroke-linecap="round" stroke-linejoin="round"><path d="M20.5 9A8.7 8.7 0 0 0 4.5 6.5M3.5 13a8.7 8.7 0 0 0 16 2.5"/><path d="M4 1.5v5h5M20 20.5v-5h-5"/></svg></div><div class="b" style="left:15px;top:672px;width:1975px;height:1px;background:#dadde5"></div><div class="t" style="left:37.3px;top:688.87px;font-size:13.5px;line-height:13.5px;color:#50535a;font-weight:400;letter-spacing:-0.065px;-webkit-text-stroke:0.5px #50535a;">Page Total</div><div class="t" style="left:773.5px;top:688.87px;font-size:13.5px;line-height:13.5px;color:#50535a;font-weight:400;letter-spacing:0.245px;-webkit-text-stroke:0.5px #50535a;">2,532.05</div><div class="t" style="left:984.2px;top:688.87px;font-size:13.5px;line-height:13.5px;color:#50535a;font-weight:400;letter-spacing:0.347px;-webkit-text-stroke:0.5px #50535a;">0.00</div><div class="t" style="left:1194.7px;top:688.87px;font-size:13.5px;line-height:13.5px;color:#50535a;font-weight:400;letter-spacing:0.231px;-webkit-text-stroke:0.5px #50535a;">2,532.05</div><div class="t" style="left:1405.4px;top:688.87px;font-size:13.5px;line-height:13.5px;color:#50535a;font-weight:400;letter-spacing:0.314px;-webkit-text-stroke:0.5px #50535a;">0.00</div><div class="b" style="left:15px;top:720px;width:1975px;height:1px;background:#eceef3"></div><div class="b" style="left:15px;top:721px;width:1975px;height:1px;background:#dadde5"></div><div class="t" style="left:37.3px;top:733.87px;font-size:13.5px;line-height:13.5px;color:#50535a;font-weight:400;letter-spacing:0.017px;-webkit-text-stroke:0.5px #50535a;">Grand Total</div><div class="t" style="left:773.5px;top:734.74px;font-size:12.48px;line-height:12.48px;color:#50535a;font-weight:400;letter-spacing:-0.55px;-webkit-text-stroke:0.5px #50535a;">13,112.10</div><div class="t" style="left:984.2px;top:733.87px;font-size:13.5px;line-height:13.5px;color:#50535a;font-weight:400;letter-spacing:-0.182px;-webkit-text-stroke:0.5px #50535a;">897.98</div><div class="t" style="left:1194.7px;top:734.75px;font-size:12.46px;line-height:12.46px;color:#50535a;font-weight:400;letter-spacing:-0.55px;-webkit-text-stroke:0.5px #50535a;">13,112.10</div><div class="t" style="left:1405.4px;top:733.87px;font-size:13.5px;line-height:13.5px;color:#50535a;font-weight:400;letter-spacing:0.314px;-webkit-text-stroke:0.5px #50535a;">0.00</div><div class="b" style="left:15px;top:770px;width:1975px;height:1px;background:#e8e9f0"></div><div class="b" style="left:26px;top:783px;width:72px;height:29px;background:#fff;border:1px solid #e0e2ea;border-radius:5px;box-sizing:border-box"></div><div class="t" style="left:37.7px;top:790.83px;font-size:13.2px;line-height:13.2px;color:#3d4049;font-weight:400;letter-spacing:-0.652px;-webkit-text-stroke:0.2px #3d4049;">25</div><svg class="b" style="left:77px;top:795px" width="9" height="5" viewBox="0 0 9 5"><path d="M0.5 0.5 L4.5 4.5 L8.5 0.5" fill="none" stroke="#a0a5b0" stroke-width="1" stroke-linecap="round" stroke-linejoin="round"/></svg><div class="t" style="left:109.6px;top:790.83px;font-size:13.2px;line-height:13.2px;color:#5a5f6b;font-weight:400;letter-spacing:-0.07px;-webkit-text-stroke:0.2px #5a5f6b;">Showing 1 to 25 of total 120</div><svg class="b" style="left:1780px;top:792px" width="7" height="10" viewBox="0 0 7 10"><path d="M6 0.8 L1.2 5 L6 9.2" fill="none" stroke="#b8bcc6" stroke-width="1.1" stroke-linecap="round"/></svg><div class="b" style="left:1802px;top:783px;width:28px;height:29px;background:#0f968a;border-radius:4px"></div><div class="t" style="left:1802px;top:783px;width:28px;height:29px;line-height:29px;text-align:center;font-size:13.5px;color:#fff;font-weight:700;margin-top:-1px">1</div><div class="t" style="left:1841.7px;top:790.07px;font-size:13.5px;line-height:13.5px;color:#4a4e57;font-weight:400;letter-spacing:0px;-webkit-text-stroke:0.2px #4a4e57;">2</div><div class="t" style="left:1870.3px;top:790.07px;font-size:13.5px;line-height:13.5px;color:#4a4e57;font-weight:400;letter-spacing:0px;-webkit-text-stroke:0.2px #4a4e57;">3</div><div class="t" style="left:1898.6px;top:790.07px;font-size:13.5px;line-height:13.5px;color:#4a4e57;font-weight:400;letter-spacing:0px;-webkit-text-stroke:0.2px #4a4e57;">4</div><div class="t" style="left:1927.7px;top:790.07px;font-size:13.5px;line-height:13.5px;color:#4a4e57;font-weight:400;letter-spacing:0px;-webkit-text-stroke:0.2px #4a4e57;">5</div><svg class="b" style="left:1961px;top:792px" width="7" height="10" viewBox="0 0 7 10"><path d="M1 0.8 L5.8 5 L1 9.2" fill="none" stroke="#4b5260" stroke-width="1.1" stroke-linecap="round"/></svg><div class="b" style="left:0px;top:934px;width:2000px;height:45px;background:#154d4b"></div><div class="t" style="left:15.0px;top:944.92px;font-size:13.8px;line-height:13.8px;color:#fff;font-weight:400;letter-spacing:-0.219px;-webkit-text-stroke:0.2px #fff;">© 2026 - First Store (Exclusive Tax) - 2203 S Promenade Blvd Suite 8105 , Rogers United States 10009 -</div><div class="b" style="left:1910px;top:955px;width:64px;height:40px;background:#0f968a;border-radius:4px 4px 0 0;box-shadow:0 0 6px rgba(0,0,0,0.15)"></div><svg class="b" style="left:1921px;top:964px" width="13" height="13" viewBox="0 0 13 13"><circle cx="6.5" cy="6.5" r="6.3" fill="#fff"/><path d="M4.6 5a1.9 1.9 0 1 1 2.6 1.8c-.5.2-.7.6-.7 1.1v.4" fill="none" stroke="#0f968a" stroke-width="1.5" stroke-linecap="round"/><circle cx="6.5" cy="10" r="0.8" fill="#0f968a"/></svg><div class="t" style="left:1937.5px;top:964.57px;font-size:13.5px;line-height:13.5px;color:#fff;font-weight:700;letter-spacing:-0.869px;">Wiki</div></div>
</body></html>
